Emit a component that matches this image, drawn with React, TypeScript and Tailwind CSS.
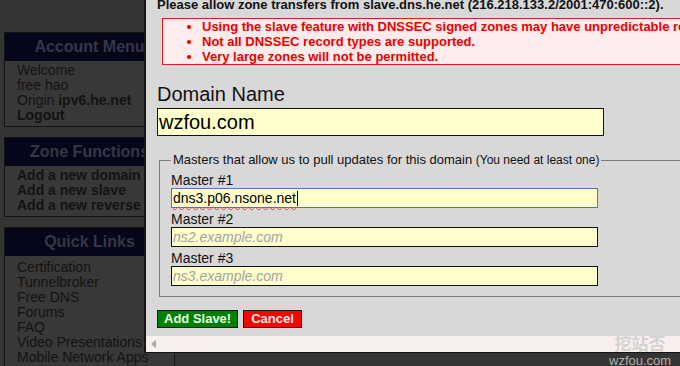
import React from 'react'

const font = { fontFamily: '"Liberation Sans", Arial, sans-serif' }

interface SideBoxProps {
  title: string
  children: React.ReactNode
  bodyClass?: string
}

const SideBox: React.FC<SideBoxProps> = ({ title, children, bodyClass = 'pt-[2px] pb-[3px]' }) => (
  <div className="w-[171px] border border-[#141414] bg-[#383838]">
    <div className="flex h-[28px] items-center justify-center bg-[#06061b] text-[16px] font-bold text-[#363644]">
      {title}
    </div>
    <div className={`pl-[12px] text-[14px] leading-[15px] text-[#131313] ${bodyClass}`}>{children}</div>
  </div>
)

const MasterField: React.FC<{ label: string; placeholder?: string; value?: string }> = ({ label, placeholder, value }) => (
  <div className="flex flex-col">
    <div className="h-[16px] text-[14px] leading-[16px] text-[#111]">{label}</div>
    {value ? (
      <div className="flex h-[20px] w-[427px] items-center border border-[#4e78b3] bg-[#ffffcc] px-[1px] text-[14px] text-black">
        <span className="underline decoration-wavy decoration-[#e04040] decoration-1 underline-offset-[3px]">{value}</span>
        <span className="ml-[1px] h-[15px] w-[1px] bg-black" />
      </div>
    ) : (
      <div className="flex h-[20px] w-[427px] items-center border border-[#111] bg-[#ffffcc] px-[1px] text-[14px] italic text-[#a3a3a3]">
        {placeholder}
      </div>
    )}
  </div>
)

export default function App() {
  return (
    <div className="relative h-[366px] w-[680px] overflow-hidden bg-[#343434]" style={font}>
      {/* dimmed sidebar */}
      <div className="flex flex-col gap-[10px] pl-[4px] pt-[32px]">
        <SideBox title="Account Menu">
          <div>Welcome</div>
          <div>free hao</div>
          <div>
            Origin <b>ipv6.he.net</b>
          </div>
          <div className="font-bold">Logout</div>
        </SideBox>
        <SideBox title="Zone Functions">
          <div className="font-bold">Add a new domain</div>
          <div className="font-bold">Add a new slave</div>
          <div className="font-bold">Add a new reverse</div>
        </SideBox>
        <SideBox title="Quick Links" bodyClass="pt-[4px] pb-[3px]">
          <div>Certification</div>
          <div>Tunnelbroker</div>
          <div>Free DNS</div>
          <div>Forums</div>
          <div>FAQ</div>
          <div>Video Presentations</div>
          <div>Mobile Network Apps</div>
        </SideBox>
      </div>

      {/* dialog */}
      <div className="absolute left-[144px] top-0 flex h-[353px] w-[536px] flex-col overflow-hidden border-b border-l-2 border-[#151515] bg-[#d8d8d8]">
        <div className="flex flex-1 flex-col overflow-hidden pl-[11px]">
          <div className="-mt-[3px] whitespace-nowrap text-[13px] font-bold leading-[15px] text-[#111]">
            Please allow zone transfers from slave.dns.he.net (216.218.133.2/2001:470:600::2).
          </div>
          <div className="ml-[5px] mt-[6px] w-[600px] border border-[#e21a1a] bg-[#fcecec]">
            <ul className="list-disc pl-[39px] text-[13px] font-bold leading-[15px] text-[#ea0000] marker:text-[#ea0000]">
              <li className="whitespace-nowrap">Using the slave feature with DNSSEC signed zones may have unpredictable results.</li>
              <li>Not all DNSSEC record types are supported.</li>
              <li>Very large zones will not be permitted.</li>
            </ul>
          </div>

          <div className="mt-[18px] text-[20px] leading-[23px] text-[#111]">Domain Name</div>
          <div className="mt-[2px] flex h-[28px] w-[447px] items-center border border-[#111] bg-[#ffffcc] px-[1px] text-[20px] text-black">
            wzfou.com
          </div>

          <fieldset className="ml-[2px] mt-[16px] w-[560px] border border-[#7c7c7c] pb-[10px] pl-[11px]">
            <legend className="px-[2px] text-[13px] leading-[15px] text-[#111]">
              Masters that allow us to pull updates for this domain <span className="text-[12px]">(You need at least one)</span>
            </legend>
            <div className="flex flex-col gap-[3px] pt-[4px]">
              <MasterField label="Master #1" value="dns3.p06.nsone.net" />
              <MasterField label="Master #2" placeholder="ns2.example.com" />
              <MasterField label="Master #3" placeholder="ns3.example.com" />
            </div>
          </fieldset>

          <div className="mt-[13px] flex gap-[5px]">
            <button className="h-[18px] border border-[#1a1a1a] bg-[#008000] px-[6px] text-[13px] font-bold leading-[16px] text-[#eaffea]">
              Add Slave!
            </button>
            <button className="h-[18px] border border-[#1a1a1a] bg-[#ff0000] px-[7px] text-[13px] font-bold leading-[16px] text-[#fff0f0]">
              Cancel
            </button>
          </div>
        </div>

        {/* horizontal scrollbar */}
        <div className="flex h-[16px] items-center bg-[#f8eeee] pl-[5px]">
          <svg width="6" height="8" viewBox="0 0 6 8">
            <path d="M5 0 L0 4 L5 8 Z" fill="#a6a6a6" />
          </svg>
        </div>
      </div>

      {/* right edge of the quick links box below the dialog */}
      <div className="absolute left-[174px] top-[353px] h-[13px] w-[1px] bg-[#141414]" />

      {/* watermark */}
      <div className="pointer-events-none absolute left-[609px] top-[334px] flex flex-col items-center leading-none">
        <span
          className="text-[17px] font-bold text-[#c9c9c9] opacity-75"
          style={{ fontFamily: '"Noto Sans CJK SC", sans-serif' }}
        >
          挖站否
        </span>
        <span className="mt-[3px] text-[13px] text-[#bdbdbd] opacity-90">wzfou.com</span>
      </div>
    </div>
  )
}
